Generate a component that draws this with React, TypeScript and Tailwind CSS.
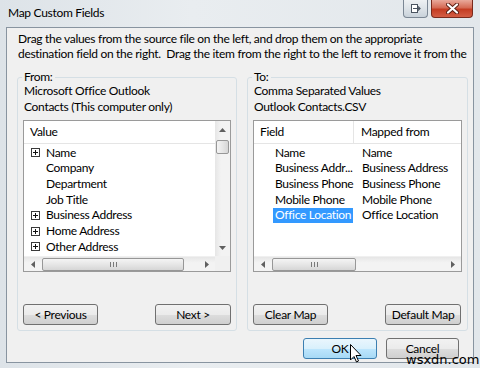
import React from "react";

type Row = { label: string; plus?: boolean };

const SOURCE_ROWS: Row[] = [
  { label: "Name", plus: true },
  { label: "Company" },
  { label: "Department" },
  { label: "Job Title" },
  { label: "Business Address", plus: true },
  { label: "Home Address", plus: true },
  { label: "Other Address", plus: true },
];

const MAPPED_ROWS = [
  { field: "Name", from: "Name" },
  { field: "Business Addr...", from: "Business Address" },
  { field: "Business Phone", from: "Business Phone" },
  { field: "Mobile Phone", from: "Mobile Phone" },
  { field: "Office Location", from: "Office Location", selected: true },
];

function Arrow({ dir }: { dir: "up" | "down" | "left" | "right" }) {
  const pts = {
    up: "0,4 3.5,0 7,4",
    down: "0,0 3.5,4 7,0",
    left: "4,0 0,3.5 4,7",
    right: "0,0 4,3.5 0,7",
  }[dir];
  const vertical = dir === "up" || dir === "down";
  return (
    <svg width={vertical ? 7 : 4} height={vertical ? 4 : 7} viewBox={vertical ? "0 0 7 4" : "0 0 4 7"}>
      <polygon points={pts} fill="#606060" />
    </svg>
  );
}

function PlusBox() {
  return (
    <span className="flex h-[9px] w-[9px] items-center justify-center border border-[#3a3a3a] bg-white">
      <svg width="5" height="5" viewBox="0 0 5 5">
        <path d="M0 2.5H5M2.5 0V5" stroke="#111" strokeWidth="1" />
      </svg>
    </span>
  );
}

function HScroll({ thumbLeft, thumbWidth }: { thumbLeft: number; thumbWidth: number }) {
  return (
    <div className="flex h-[15px] flex-1 items-center border-t border-[#f0f0f0] bg-[linear-gradient(#e6e6e6,#f3f3f3_40%,#f3f3f3)]">
      <span className="flex w-[17px] justify-center">
        <Arrow dir="left" />
      </span>
      <div className="relative h-full flex-1">
        <div
          className="absolute top-[1px] flex h-[13px] items-center justify-center gap-[2px] rounded-[2px] border border-[#979797] bg-[linear-gradient(#f4f4f4,#e6e6e6_50%,#d6d6d6)]"
          style={{ left: thumbLeft, width: thumbWidth }}
        >
          <span className="h-[5px] w-px bg-[#7a7a7a]" />
          <span className="h-[5px] w-px bg-[#7a7a7a]" />
          <span className="h-[5px] w-px bg-[#7a7a7a]" />
        </div>
      </div>
      <span className="flex w-[17px] justify-center">
        <Arrow dir="right" />
      </span>
    </div>
  );
}

function Button({ children, hot }: { children: React.ReactNode; hot?: boolean }) {
  return (
    <button
      className={
        "flex h-[21px] w-full items-center justify-center rounded-[3px] border text-[12px] leading-none tracking-[-0.3px] text-black " +
        (hot
          ? "border-[#3c7fb1] bg-[linear-gradient(#eaf6fd,#d9f0fc_50%,#bee6fd_51%,#a7d9f5)]"
          : "border-[#707070] bg-[linear-gradient(#f2f2f2,#ebebeb_50%,#dddddd_51%,#cfcfcf)]")
      }
    >
      {children}
    </button>
  );
}

function Group({ label, lines, children }: { label: string; lines: string[]; children: React.ReactNode }) {
  return (
    <div className="relative flex h-[254px] flex-col rounded-[3px] border border-[#d5dfe5] px-[5px] pt-[5px] pb-[4px]">
      <span className="absolute -top-[7px] left-[4px] bg-[#f0f0f0] px-[2px] leading-[12px]">{label}</span>
      {lines.map((l) => (
        <div key={l} className="ml-[1px] leading-[16px]">
          {l}
        </div>
      ))}
      {children}
    </div>
  );
}

export default function App() {
  return (
    <div className="relative h-[368px] w-[480px] overflow-hidden bg-[linear-gradient(90deg,#dde3e8,#e9edf0_40%,#e2e7eb)] font-['Lato',sans-serif] text-[12px] tracking-[-0.3px] text-black">
      {/* title bar */}
      <div className="flex h-[27px] items-start">
        <span className="pl-[8px] pt-[5px] text-[12px] leading-[16px]">Map Custom Fields</span>
        <div className="ml-auto mr-[7px] flex gap-[3px]">
          <div className="flex h-[18px] w-[25px] items-center justify-center rounded-b-[4px] border border-t-0 border-[#7b8794] bg-[linear-gradient(#eef1f3,#dde3e8_50%,#c9d2da)]">
            <svg width="11" height="10" viewBox="0 0 11 10">
              <rect x="1.5" y="0.5" width="6" height="8" fill="#fff" stroke="#4a5460" />
              <path d="M3 4.5H10M8 2.5L10 4.5L8 6.5" stroke="#4a5460" strokeWidth="1.2" fill="none" />
            </svg>
          </div>
          <div className="flex h-[18px] w-[42px] items-center justify-center rounded-b-[4px] border border-t-0 border-[#7a2a1c] bg-[linear-gradient(#e9a99b,#d56b55_45%,#c43c22_55%,#d45e45)]">
            <svg width="13" height="11" viewBox="0 0 13 11">
              <path d="M2 1.5L11 9.5M11 1.5L2 9.5" stroke="#5a1d12" strokeWidth="4" strokeLinecap="round" />
              <path d="M2 1.5L11 9.5M11 1.5L2 9.5" stroke="#fff" strokeWidth="2.2" strokeLinecap="round" />
            </svg>
          </div>
        </div>
      </div>

      {/* client area */}
      <div className="mx-[6px] flex h-[336px] flex-col border border-[#8894a0] bg-[#f0f0f0]">
        <p className="whitespace-pre pl-[11px] pt-[3px] leading-[15px]">
          {"Drag the values from the source file on the left, and drop them on the appropriate\ndestination field on the right.  Drag the item from the right to the left to remove it from the"}
        </p>

        <div className="mt-[16px] flex gap-[10px] pl-[10px]">
          <div className="w-[220px]">
            <Group label="From:" lines={["Microsoft Office Outlook", "Contacts (This computer only)"]}>
              <div className="mt-[5px] flex h-[152px] flex-col border border-[#9a9a9a] bg-white">
                <div className="flex flex-1">
                  <div className="flex-1 overflow-hidden">
                    <div className="flex h-[23px] items-center border-b border-[#e5e5e5] pl-[6px]">Value</div>
                    <div className="pt-px">
                      {SOURCE_ROWS.map((r) => (
                        <div key={r.label} className="flex h-[15.67px] items-center whitespace-nowrap">
                          <span className="flex w-[22px] justify-center pl-[1px]">{r.plus && <PlusBox />}</span>
                          <span>{r.label}</span>
                        </div>
                      ))}
                    </div>
                  </div>
                  <div className="flex w-[15px] flex-col items-center bg-[linear-gradient(90deg,#e6e6e6,#f3f3f3_40%,#f3f3f3)]">
                    <span className="flex h-[17px] items-center">
                      <Arrow dir="up" />
                    </span>
                    <div className="mt-[2px] h-[14px] w-[13px] rounded-[2px] border border-[#979797] bg-[linear-gradient(90deg,#f4f4f4,#e6e6e6_50%,#d6d6d6)]" />
                    <span className="mt-auto flex h-[17px] items-center">
                      <Arrow dir="down" />
                    </span>
                  </div>
                </div>
                <div className="flex">
                  <HScroll thumbLeft={1} thumbWidth={142} />
                  <div className="h-[15px] w-[15px] bg-[#f0f0f0]" />
                </div>
              </div>
              <div className="mt-[32px] flex justify-between">
                <div className="w-[75px]">
                  <Button>&lt; Previous</Button>
                </div>
                <div className="w-[76px]">
                  <Button>Next &gt;</Button>
                </div>
              </div>
            </Group>
          </div>

          <div className="w-[221px]">
            <Group label="To:" lines={["Comma Separated Values", "Outlook Contacts.CSV"]}>
              <div className="mt-[5px] flex h-[152px] flex-col border border-[#9a9a9a] bg-white">
                <div className="flex-1 overflow-hidden">
                  <div className="flex h-[23px] border-b border-[#e5e5e5]">
                    <div className="flex w-[100px] items-center border-r border-[#e5e5e5] pl-[6px]">Field</div>
                    <div className="flex items-center pl-[7px]">Mapped from</div>
                  </div>
                  <div className="pt-px">
                    {MAPPED_ROWS.map((r) => (
                      <div key={r.field} className="flex h-[15.67px] items-stretch whitespace-nowrap">
                        <div className="flex w-[101px] overflow-hidden pl-[19px]">
                          <span
                            className={
                              "flex items-center px-[2px] " + (r.selected ? "my-[0.5px] bg-[#3399ff] text-white" : "")
                            }
                          >
                            {r.field}
                          </span>
                        </div>
                        <span className="flex items-center pl-[7px]">{r.from}</span>
                      </div>
                    ))}
                  </div>
                </div>
                <div className="flex">
                  <HScroll thumbLeft={1} thumbWidth={84} />
                </div>
              </div>
              <div className="mt-[32px] flex justify-between pr-[1px]">
                <div className="w-[75px]">
                  <Button>Clear Map</Button>
                </div>
                <div className="w-[76px]">
                  <Button>Default Map</Button>
                </div>
              </div>
            </Group>
          </div>
        </div>

        <div className="mt-[7px] flex justify-end gap-[9px] pr-[14px]">
          <div className="w-[74px]">
            <Button hot>OK</Button>
          </div>
          <div className="w-[73px]">
            <Button>Cancel</Button>
          </div>
        </div>
      </div>

      {/* mouse cursor over OK */}
      <svg className="absolute left-[350px] top-[344px]" width="12" height="19" viewBox="0 0 12 19">
        <path d="M0.5 0.5V16L4 12.5L6.5 18L8.5 17L6 11.5H11Z" fill="#fff" stroke="#000" strokeWidth="1" />
      </svg>

      {/* watermark */}
      <span className="absolute left-[406px] top-[352px] font-['DejaVu_Sans',sans-serif] text-[13px] leading-[16px] tracking-normal text-black">
        wsxdn.com
      </span>
    </div>
  );
}
